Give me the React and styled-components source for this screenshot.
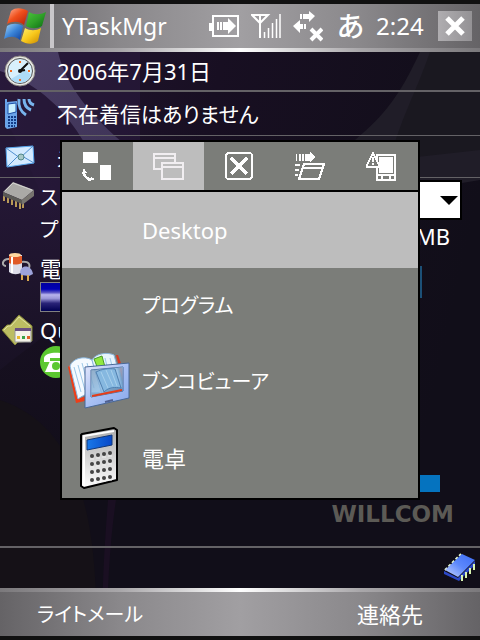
import React from 'react';
import styled, { createGlobalStyle, css } from 'styled-components';

const GlobalStyle = createGlobalStyle`
  * { box-sizing: border-box; }
  body {
    margin: 0;
    background: #110e19;
    color: #fff;
    font-family: "Noto Sans", "Noto Sans CJK JP", sans-serif;
    font-size: 22px;
    line-height: 32px;
    font-feature-settings: "palt";
  }
  button, select { font: inherit; font-feature-settings: inherit; color: inherit; }
  svg { display: block; }
`;

const Screen = styled.div`
  position: relative;
  isolation: isolate;
  min-height: 100vh;
  display: flex;
  flex-direction: column;
  overflow: hidden;
`;

const Wallpaper = styled.svg`
  position: absolute;
  inset: 0;
  width: 100%;
  height: 100%;
  z-index: -1;
`;

const Kana = styled.span`
  font-size: 20px;
`;

const metal = 'linear-gradient(90deg, #656366, #8a888b 25%, #a19fa2 50%, #8a888b 75%, #656366)';
const shine = 'linear-gradient(90deg, #7b797c, #a9a7aa 25%, #fff 50%, #a9a7aa 75%, #7b797c)';

const TitleBar = styled.header`
  display: flex;
  align-items: center;
  height: 52px;
  padding-right: 8px;
  border-top: 4px solid #111;
  border-bottom: 4px solid transparent;
  background: ${metal} padding-box, ${shine} border-box;
`;

const StartButton = styled.button`
  flex: none;
  width: 54px;
  height: 44px;
  padding: 2px 4px;
  border: 0;
  border-right: 4px solid #c9c7ca;
  background: linear-gradient(90deg, #656366, #737174);
`;

const Title = styled.h1`
  flex: 1;
  margin: 0;
  padding-left: 8px;
  font-size: 23px;
  font-weight: 400;
`;

const Status = styled.div`
  display: flex;
  align-items: center;
  gap: 12px;
`;

const InputMode = styled.span`
  padding-left: 2px;
  font-size: 28px;
  font-weight: 500;
`;

const Clock = styled.time`
  width: 62px;
  font-size: 24px;
`;

const CloseButton = styled.button`
  width: 34px;
  height: 30px;
  padding: 0;
  display: grid;
  place-items: center;
  border: 0;
  background: linear-gradient(90deg, #afadb0, #949295);
`;

const InfoRow = styled.div`
  display: flex;
  align-items: center;
  height: ${p => p.$height}px;
  padding-left: 4px;
  gap: 21px;
  font-size: ${p => p.$size || 22}px;
  border-bottom: ${p => p.$line}px solid #646266;
`;

const Today = styled.main`
  flex: 1;
  display: flex;
  flex-direction: column;
`;

const Plugin = styled.section`
  display: grid;
  grid-template-columns: 38px 1fr;
  padding: ${p => p.$top}px 18px 0 2px;
`;

const Storage = styled.div`
  display: grid;
  grid-template-columns: 1fr 2fr;
`;

const Line = styled.div`
  height: ${p => p.$height || 32}px;
  padding-right: ${p => (p.$end ? 12 : 0)}px;
  text-align: ${p => (p.$end ? 'right' : 'left')};
  white-space: nowrap;
`;

const SelectBox = styled.div`
  position: relative;
  svg { position: absolute; right: 4px; top: 16px; pointer-events: none; }
`;

const Select = styled.select`
  width: 100%;
  height: 40px;
  display: block;
  appearance: none;
  border: 2px solid #000;
  border-radius: 0;
  background: #fff;
  color: #000;
`;

const Gauge = styled.div`
  width: 88%;
  height: 30px;
  border: 1px solid #808080;
  background: linear-gradient(#0000a0, #0000b4 22%, #5a54c4 34%, #b8b4ec 42%, #9c98d8 55%, #2a2478 72%, #000050);
`;

const Brand = styled.div`
  margin-top: auto;
  padding: 0 26px 16px 0;
  text-align: right;
  font: bold 23px/32px "DejaVu Sans", sans-serif;
  color: #5c5a55;
`;

const Tray = styled.div`
  display: flex;
  justify-content: flex-end;
  align-items: center;
  height: 42px;
  padding-right: 4px;
  border-top: 2px solid #646266;
`;

const SoftKeys = styled.footer`
  border-top: 4px solid transparent;
  border-bottom: 4px solid #111;
  display: flex;
  justify-content: space-between;
  height: 52px;
  background: ${metal} padding-box, ${shine} border-box;
`;

const SoftKey = styled.button`
  width: 37.5%;
  padding: 0;
  border: 0;
  background: none;
`;

const Overlay = styled.div`
  position: absolute;
  inset: 0;
  display: grid;
  place-items: center;
`;

const Popup = styled.div`
  width: 75%;
  border: 2px solid #000;
  background: #7b7d79;
  padding-bottom: 2px;
`;

const Tabs = styled.div`
  display: flex;
  border-bottom: 2px solid #000;
`;

const selected = css`background: #bdbdbd;`;

const Tab = styled.button`
  flex: 1;
  height: 48px;
  padding: 0;
  display: grid;
  place-items: center;
  border: 0;
  background: none;
  ${p => p.$on && selected}
  svg { shape-rendering: crispEdges; }
`;

const Task = styled.button`
  width: 100%;
  height: 76px;
  padding: 0 0 0 6px;
  display: grid;
  grid-template-columns: 64px 1fr;
  align-items: center;
  gap: 10px;
  border: 0;
  background: none;
  text-align: left;
  ${p => p.$on && selected}
`;

const Backdrop = () => (
  <Wallpaper viewBox="0 0 480 640" preserveAspectRatio="xMidYMid slice" aria-hidden="true">
    <defs>
      <linearGradient id="base" x1="0" y1="0" x2="1" y2="0.3">
        <stop offset="0" stopColor="#241633" />
        <stop offset="0.45" stopColor="#180f22" />
        <stop offset="1" stopColor="#110e19" />
      </linearGradient>
      <linearGradient id="fade" x1="0" y1="0" x2="0" y2="1">
        <stop offset="0.3" stopColor="#110e19" stopOpacity="0" />
        <stop offset="0.75" stopColor="#110e19" />
      </linearGradient>
      <linearGradient id="ribbon" x1="0" y1="0" x2="1" y2="1">
        <stop offset="0" stopColor="#4b3f66" />
        <stop offset="1" stopColor="#3f3458" />
      </linearGradient>
    </defs>
    <rect width="480" height="640" fill="url(#base)" />
    <path d="M0 110C40 180 90 300 110 460V640H0Z" fill="#1d1228" />
    <path d="M0 370C50 330 100 300 140 240V0H0Z" fill="#2c1c42" opacity=".5" />
    <rect width="480" height="640" fill="url(#fade)" />
    <path d="M0 400C60 420 100 480 96 640H0Z" fill="#151117" />
    <path d="M108 500C104 550 102 590 102 640H107C107 590 110 540 116 500Z" fill="#1a0f22" />
    <path d="M420 52C400 95 385 115 355 140L420 190L480 180V52Z" fill="#201d28" />
    <path d="M430 52C415 95 400 120 390 160L480 150V52Z" fill="#1a1820" />
    <path d="M0 52H58C64 78 82 108 122 142H84C66 112 40 84 0 71Z" fill="url(#ribbon)" />
    <path d="M420 266H422V298H420Z" fill="#1c5077" />
    <path d="M400 475H440V492H400Z" fill="#0573bf" />
  </Wallpaper>
);

const Flag = () => (
  <svg width="42" height="38" viewBox="0 0 42 38" aria-hidden="true">
    <defs>
      <linearGradient id="fr" x1="0" y1="0" x2="1" y2="1"><stop stopColor="#ffb59a" /><stop offset=".45" stopColor="#f0501c" /><stop offset="1" stopColor="#b01c08" /></linearGradient>
      <linearGradient id="fg" x1="0" y1="0" x2="1" y2="1"><stop stopColor="#4cc43c" /><stop offset=".5" stopColor="#2fa028" /><stop offset="1" stopColor="#0a6a14" /></linearGradient>
      <linearGradient id="fb" x1="0" y1="0" x2="1" y2="1"><stop stopColor="#a8d8fa" /><stop offset=".5" stopColor="#3a84d8" /><stop offset="1" stopColor="#0c3c98" /></linearGradient>
      <linearGradient id="fy" x1="0" y1="0" x2="1" y2="1"><stop stopColor="#fff070" /><stop offset=".5" stopColor="#f8c81c" /><stop offset="1" stopColor="#c88800" /></linearGradient>
    </defs>
    <path d="M7 4C12 0 18 1 24 4L20 18C15 14 9 14 3 17Z" fill="url(#fr)" />
    <path d="M25 5C30 8 36 8 42 5L38 19C33 22 27 22 22 19Z" fill="url(#fg)" />
    <path d="M3 19C8 16 14 16 19 19L16 33C11 29 6 29 0 32Z" fill="url(#fb)" />
    <path d="M21 21C26 24 32 24 37 21L34 34C29 38 22 37 17 34Z" fill="url(#fy)" />
  </svg>
);

const BatteryStatus = () => (
  <svg width="30" height="24" viewBox="0 0 30 24" fill="#fff" aria-label="充電中">
    <path d="M0 9H3V1H30V23H3V17H0ZM5 3V21H28V3Z" fillRule="evenodd" />
    <path d="M8 8h2v8H8zM11 8h2v8h-2zM14 8h5V4l8 8-8 8v-4h-5z" />
  </svg>
);

const SignalStatus = () => (
  <svg width="30" height="26" viewBox="0 0 30 26" fill="none" stroke="#fff" aria-label="電波">
    <path d="M1 2H17L9 10ZM9 2V25" strokeWidth="2" />
    <path d="M13.500 19V25M17.500 15V25M21.500 10V25M25.500 6V25M29 1V25" strokeWidth="1.500" />
  </svg>
);

const LinkStatus = () => (
  <svg width="30" height="32" viewBox="0 0 30 32" fill="#fff" aria-label="未接続">
    <path d="M7 4h2v5H7zM10 4h6V1l6 5-6 6V9h-6zM0 16l7-6v4h3v5H7v4zM11 14h2v5h-2z" />
    <path d="M18 19L29 30M29 19L18 30" stroke="#fff" strokeWidth="4" />
  </svg>
);

const ClockIcon = () => (
  <svg width="32" height="34" viewBox="0 0 32 34" aria-hidden="true">
    <circle cx="16" cy="17" r="15" fill="#e9e9e6" stroke="#8a8680" strokeWidth="1" />
    <circle cx="16" cy="17" r="12.500" fill="#d8f0fc" stroke="#555" strokeWidth="1" />
    <path d="M7 25A12 12 0 0 0 27 21L22 16Z" fill="#aedcf8" />
    <path d="M15 7h2v2h-2zM15 25h2v2h-2zM6 16h2v2H6zM24 16h2v2h-2z" fill="#f36a20" />
    <path d="M16 17L24 9M16 17L21 16" stroke="#111" strokeWidth="2" />
    <circle cx="16" cy="17" r="2" fill="#111" />
  </svg>
);

const PhoneIcon = () => (
  <svg width="32" height="32" viewBox="0 0 32 32" aria-hidden="true">
    <path d="M1 1H3V4L13 3V29L3 31L1 29Z" fill="#6aa4e8" />
    <path d="M4 6L12 5V14L4 16Z" fill="#c8f0ff" stroke="#1c50a8" />
    <path d="M4 19H12M4 22H12M4 25H12M4 28H11" stroke="#123c88" strokeWidth="2" strokeDasharray="2 1" />
    <g fill="none" stroke="#78b4ec" strokeWidth="3">
      <path d="M15 1C14 8 17 14 22 17" /><path d="M20 1C20 6 22 10 27 12" /><path d="M25 1C25 4 27 6 30 7" />
    </g>
  </svg>
);

const MailIcon = () => (
  <svg width="32" height="28" viewBox="0 0 32 28" aria-hidden="true">
    <path d="M2 5L29 3L30 20L3 24Z" fill="#d4eaff" stroke="#58a8f0" />
    <path d="M2 5L16 15L29 3M3 24L14 13M30 20L18 13" fill="none" stroke="#4f8fd0" />
    <circle cx="17" cy="14" r="3" fill="#a8c8c8" stroke="#538888" />
  </svg>
);

const ChipIcon = () => (
  <svg width="32" height="30" viewBox="0 0 32 30" aria-hidden="true">
    <path d="M2 13V21M6 15V23M10 17V25M14 19V27M18 21V29M21 21V28" stroke="#b99a58" strokeWidth="2" />
    <path d="M1 12L11 2L32 10L20 20Z" fill="#aaa9a6" />
    <path d="M1 12L20 20V24L1 16Z" fill="#5a5955" />
    <path d="M20 20L32 10V16L20 25Z" fill="#77746f" />
    <path d="M3 11L11 3L30 10" fill="none" stroke="#d4d4d0" />
  </svg>
);

const PowerIcon = () => (
  <svg width="32" height="30" viewBox="0 0 32 30" aria-hidden="true">
    <path d="M8 7C0 6 -1 14 4 14M19 10C28 9 28 13 27 16" fill="none" stroke="#aaa" strokeWidth="2" />
    <path d="M7 3H20V20C16 23 11 23 7 20Z" fill="#dcdce8" />
    <path d="M7 4H20V11C15 13 11 13 7 11Z" fill="#e05a28" />
    <ellipse cx="13" cy="3" rx="6" ry="2" fill="#ffd8a0" />
    <path d="M10 5V21" stroke="#fff" strokeWidth="2" />
    <path d="M18 20C19 13 29 12 31 22L27 24L19 23Z" fill="#9da3da" />
    <path d="M20 23V28M26 23V29" stroke="#d8a850" strokeWidth="2" />
  </svg>
);

const HomeIcon = () => (
  <svg width="32" height="32" viewBox="0 0 32 32" aria-hidden="true">
    <path d="M0 16L5 11H8L17 1L30 12V27L16 28L13 31Z" fill="#bcbd62" stroke="#85863a" />
    <path d="M2 16L6 12H9L17 3L28 12" fill="none" stroke="#e0e0a0" />
    <path d="M13 15H29V28H13Z" fill="#f4f2e8" stroke="#999" />
    <path d="M13 14H29V17H13Z" fill="#6a5080" />
    <path d="M15 22h3v3h-3z" fill="#e8b830" /><path d="M20 22h3v3h-3z" fill="#38a048" /><path d="M25 22h3v3h-3z" fill="#e06028" />
  </svg>
);

const DialIcon = () => (
  <svg width="32" height="32" viewBox="0 0 32 32" aria-hidden="true">
    <circle cx="16" cy="16" r="16" fill="#5cc830" />
    <path d="M4 12C5 5 27 5 28 12V16H22V12H10V16H4Z" fill="#fff" />
    <path d="M10 15H22L27 26H5Z" fill="#fff" />
    <circle cx="16" cy="20" r="4" fill="#5cc830" />
  </svg>
);

const BlueChip = () => (
  <svg width="32" height="30" viewBox="0 0 32 30" aria-hidden="true">
    <defs><linearGradient id="bc" x1="1" y1="0" x2="0" y2="1"><stop stopColor="#3c6cf4" /><stop offset=".5" stopColor="#5c88fc" /><stop offset="1" stopColor="#c8d4ff" /></linearGradient></defs>
    <path d="M1 17L17 1" stroke="#e4f8d0" strokeWidth="2" strokeDasharray="3 2" />
    <path d="M1 17L18 1L31 7L14 24Z" fill="url(#bc)" />
    <path d="M0 18L14 25L31 8V12L15 28L0 21Z" fill="#2c48c8" />
    <path d="M18 22V28M22 19V25M26 15V21M30 11V17" stroke="#d8f4b0" strokeWidth="2" />
  </svg>
);

const SwapIcon = () => (
  <svg width="32" height="32" viewBox="0 0 32 32" fill="#fff" aria-hidden="true">
    <path d="M1 2h15v11H1zM18 15h11v15H18z" />
    <path d="M2 18L5 23H3C4 26 6 28 9 28V27L13 29L7 31C3 29 1 26 0 23Z" />
  </svg>
);

const WindowsIcon = () => (
  <svg width="32" height="32" viewBox="0 0 32 32" fill="none" stroke="#f1eef1" strokeWidth="2" aria-hidden="true">
    <path d="M8 19H1V4H22V13M1 8H22" />
    <path d="M9 13H30V29H9ZM9 17H30" />
  </svg>
);

const CloseBoxIcon = () => (
  <svg width="32" height="32" viewBox="0 0 32 32" fill="none" stroke="#fff" aria-hidden="true">
    <rect x="2" y="3" width="26" height="26" rx="3" strokeWidth="2" />
    <path d="M7 8L23 24M23 8L7 24" strokeWidth="4" />
  </svg>
);

const FolderIcon = () => (
  <svg width="32" height="32" viewBox="0 0 32 32" fill="#fff" aria-hidden="true">
    <path d="M1 4h1v7H1zM4 4h2v7H4zM7 4h2v7H7zM10 4h5V2l5 5-5 6v-2h-5zM0 14h5v2H0zM0 19h4v2H0zM0 24h3v2H0z" />
    <path d="M9 14H29L24 29H4ZM7 18H27" fill="none" stroke="#fff" strokeWidth="2" />
  </svg>
);

const AlertPhoneIcon = () => (
  <svg width="32" height="32" viewBox="0 0 32 32" aria-hidden="true">
    <path d="M11 5H29V30H11ZM11 25H29M16 25V29M24 25V29" fill="#7b7d79" stroke="#fff" strokeWidth="2" />
    <path d="M13 7H27V23H13Z" fill="#fff" />
    <path d="M7 3L14 17H0Z" fill="#7b7d79" stroke="#fff" strokeWidth="2" strokeLinejoin="round" />
    <path d="M7 7V12M7 13V15" stroke="#fff" strokeWidth="2" />
  </svg>
);

const BookIcon = () => (
  <svg width="64" height="60" viewBox="0 0 64 60" aria-hidden="true">
    <defs>
      <linearGradient id="frame" x1="0" y1="0" x2="1" y2="1"><stop stopColor="#e4e8fc" /><stop offset=".5" stopColor="#a8c0f4" /><stop offset="1" stopColor="#88a8ec" /></linearGradient>
      <linearGradient id="glass" x1="0" y1="0" x2="1" y2="1"><stop stopColor="#7898b8" /><stop offset=".5" stopColor="#8ab8e0" /><stop offset="1" stopColor="#5888c0" /></linearGradient>
    </defs>
    <path d="M0 15L2 13L11 46L34 41L52 37V41L8 51Z" fill="#ee3e18" />
    <path d="M48 3L50 3L56 20V34Z" fill="#d83820" />
    <path d="M2 14C4 7 16 3 24 8L34 42C26 38 17 42 10 47Z" fill="#f4faff" stroke="#8cb8e0" />
    <path d="M24 8C28 1 40 0 46 3L55 36C46 34 38 36 34 42Z" fill="#e8f4fc" stroke="#8cb8e0" />
    <path d="M6 15L13 40M10 13L17 38M14 11L21 37M19 11L26 36M37 6L44 34M42 6L49 33" stroke="#9cc8e8" />
    <path d="M26 7L34 4L37 15L30 17Z" fill="#90e840" stroke="#4a9a28" />
    <path fillRule="evenodd" d="M17 15L61 11V46L17 56ZM23 18V45L55 39V15Z" fill="url(#frame)" stroke="#486898" />
    <path d="M23 18L55 15V39L23 45Z" fill="url(#glass)" opacity=".8" />
    <path d="M28 20L36 40C41 35 47 35 53 36L47 17C40 16 34 17 28 20Z" fill="#86b8e0" stroke="#5080b0" />
    <path d="M33 20L40 36M38 18L45 34M43 18L49 34" stroke="#a8d0ec" />
    <path d="M24 43L54 37V39L24 45Z" fill="#e63c18" />
    <path d="M37 50L45 48" stroke="#506090" strokeWidth="2" />
  </svg>
);

const CalculatorIcon = () => (
  <svg width="64" height="64" viewBox="0 0 64 64" aria-hidden="true">
    <defs>
      <linearGradient id="body" x1="0" y1="0" x2="0" y2="1"><stop stopColor="#aaa" /><stop offset="1" stopColor="#fff" /></linearGradient>
      <linearGradient id="lcd"><stop stopColor="#1878e8" /><stop offset="1" stopColor="#0848c8" /></linearGradient>
    </defs>
    <path d="M14 8L46 2L49 4V54L16 62L13 60V9Z" fill="url(#body)" stroke="#000" strokeWidth="2" strokeLinejoin="round" />
    <path d="M16 60V10L46 5" fill="none" stroke="#fff" strokeWidth="2" />
    <path d="M19 14L44 9V19L19 24Z" fill="url(#lcd)" stroke="#123878" />
    {[0, 1, 2, 3].flatMap(r => [0, 1, 2, 3].map(c => (
      <g key={`${r}${c}`}>
        <circle cx={24 + c * 6} cy={30 + r * 8 - c} r="2" fill="#444" />
        <path d={`M${22 + c * 6} ${33 + r * 8 - c}h4`} stroke="#eee" strokeWidth="1" />
      </g>
    )))}
  </svg>
);

const tabs = [
  ['切り替え', SwapIcon],
  ['ウィンドウ', WindowsIcon],
  ['終了', CloseBoxIcon],
  ['フォルダ', FolderIcon],
  ['デバイス', AlertPhoneIcon],
];

const tasks = [
  { name: 'Desktop' },
  { name: 'プログラム', Label: Kana },
  { name: 'ブンコビューア', Label: Kana, Icon: BookIcon },
  { name: '電卓', Icon: CalculatorIcon },
];

export default function App() {
  return (
    <>
      <GlobalStyle />
      <Screen>
        <Backdrop />
        <TitleBar>
          <StartButton aria-label="スタート"><Flag /></StartButton>
          <Title>YTaskMgr</Title>
          <Status>
            <BatteryStatus />
            <SignalStatus />
            <LinkStatus />
            <InputMode>あ</InputMode>
            <Clock>2:24</Clock>
          </Status>
          <CloseButton aria-label="閉じる">
            <svg width="20" height="20" viewBox="0 0 20 20"><path d="M2 2L18 18M18 2L2 18" stroke="#fff" strokeWidth="5" /></svg>
          </CloseButton>
        </TitleBar>

        <Today>
          <InfoRow $height={40} $line={2}><ClockIcon /><span>2006年7月31日</span></InfoRow>
          <InfoRow $height={44} $line={1} $size={21}><PhoneIcon /><span>不在着信はありません</span></InfoRow>
          <InfoRow $height={42} $line={1}><MailIcon /><span>未読メッセージ</span></InfoRow>

          <Plugin $top={2}>
            <ChipIcon />
            <Storage>
              <div>
                <Line><Kana as="label" htmlFor="storage">ストレージ</Kana></Line>
                <Line><Kana>プログラム</Kana></Line>
              </div>
              <div>
                <SelectBox>
                  <Select id="storage" defaultValue=""><option value="" /></Select>
                  <svg width="18" height="10" viewBox="0 0 18 10"><path d="M0 0H18L9 9Z" fill="#000" /></svg>
                </SelectBox>
                <Line $end>MB</Line>
              </div>
            </Storage>
          </Plugin>
          <Plugin $top={0}>
            <PowerIcon />
            <div>
              <Line $height={30}>電源</Line>
              <Gauge />
            </div>
          </Plugin>
          <Plugin $top={2}>
            <HomeIcon />
            <div>
              <Line>QuickDial</Line>
              <DialIcon />
            </div>
          </Plugin>
          <Brand>WILLCOM</Brand>
        </Today>

        <Tray><BlueChip /></Tray>
        <SoftKeys>
          <SoftKey><Kana>ライトメール</Kana></SoftKey>
          <SoftKey>連絡先</SoftKey>
        </SoftKeys>

        <Overlay>
          <Popup role="dialog" aria-label="YTaskMgr">
            <Tabs>
              {tabs.map(([name, Icon], i) => (
                <Tab key={name} $on={i === 1} aria-label={name}><Icon /></Tab>
              ))}
            </Tabs>
            {tasks.map(({ name, Icon = 'span', Label = 'span' }, i) => (
              <Task key={name} $on={i === 0}>
                <Icon />
                <Label>{name}</Label>
              </Task>
            ))}
          </Popup>
        </Overlay>
      </Screen>
    </>
  );
}
